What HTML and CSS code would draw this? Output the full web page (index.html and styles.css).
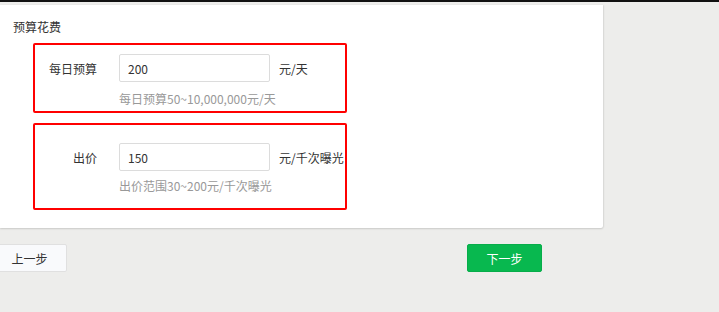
FILE: index.html
```html
<!DOCTYPE html>
<html lang="zh-CN">
  <head>
    <meta charset="UTF-8" />
    <meta name="viewport" content="width=device-width, initial-scale=1.0" />
    <title>预算花费</title>
    <link rel="stylesheet" href="styles.css">
  </head>
  <body>
    <div class="topbar"></div>
    <div class="page">
      <div class="card">
        <div class="card-title">预算花费</div>
        <div class="field field-budget">
          <div class="field-row">
            <label class="field-label">每日预算</label>
            <input class="field-input" type="text" value="200" />
            <span class="field-unit">元/天</span>
          </div>
          <div class="field-hint">每日预算50~10,000,000元/天</div>
        </div>
        <div class="field field-bid">
          <div class="field-row">
            <label class="field-label">出价</label>
            <input class="field-input" type="text" value="150" />
            <span class="field-unit">元/千次曝光</span>
          </div>
          <div class="field-hint">出价范围30~200元/千次曝光</div>
        </div>
      </div>
      <div class="actions">
        <button class="btn btn-prev">上一步</button>
        <button class="btn btn-next">下一步</button>
      </div>
    </div>
  </body>
</html>
```

FILE: styles.css
```css
:root {
  --bg-color: #ededeb;
  --text-color: #333;
  --hint-color: #999;
  --border-color: #dcdcdc;
  --mark-color: #ff0000;
  --green: #08b84f;
}

body {
  margin: 0;
  padding: 0;
  background-color: var(--bg-color);
  font-family: "Noto Sans CJK SC", "Liberation Sans", sans-serif;
  font-size: 12px;
  color: var(--text-color);
  overflow: hidden;
}

.topbar {
  height: 2px;
  background-color: #111;
}

.page {
  padding-top: 3px;
}

.card {
  width: 603px;
  box-sizing: border-box;
  background-color: #fff;
  padding: 12px 0 18px 13px;
  box-shadow: 0 1px 2px rgba(0, 0, 0, 0.14), 1px 0 2px rgba(0, 0, 0, 0.06);
  border-bottom-right-radius: 2px;
}

.card-title {
  line-height: 19px;
}

.field {
  width: 314px;
  box-sizing: border-box;
  margin-left: 20px;
  border: 2px solid var(--mark-color);
  border-radius: 2px;
}

.field-budget {
  margin-top: 7px;
  padding: 9px 0 3px;
}

.field-bid {
  margin-top: 10px;
  padding: 18px 0 13px;
}

.field-row {
  display: flex;
  align-items: center;
  height: 28px;
}

.field-label {
  width: 62px;
  margin-right: 22px;
  text-align: right;
}

.field-input {
  width: 151px;
  height: 28px;
  box-sizing: border-box;
  border: 1px solid var(--border-color);
  border-radius: 2px;
  padding: 0 8px;
  font-family: inherit;
  font-size: 12px;
  color: var(--text-color);
  outline: none;
}

.field-unit {
  margin-left: 9px;
  white-space: nowrap;
}

.field-hint {
  margin-left: 84px;
  color: var(--hint-color);
  line-height: 18px;
}

.field-budget .field-hint {
  margin-top: 8px;
}

.field-bid .field-hint {
  margin-top: 6px;
}

.actions {
  display: flex;
  gap: 400px;
  margin-top: 16px;
  margin-left: -8px;
}

.btn {
  width: 75px;
  height: 28px;
  box-sizing: border-box;
  border-radius: 2px;
  font-family: inherit;
  font-size: 12px;
  cursor: pointer;
}

.btn-prev {
  background-color: #f9fafc;
  border: 1px solid #e0e0e0;
  color: var(--text-color);
}

.btn-next {
  background-color: var(--green);
  border: 1px solid #07ad4a;
  color: #fff;
}
```
